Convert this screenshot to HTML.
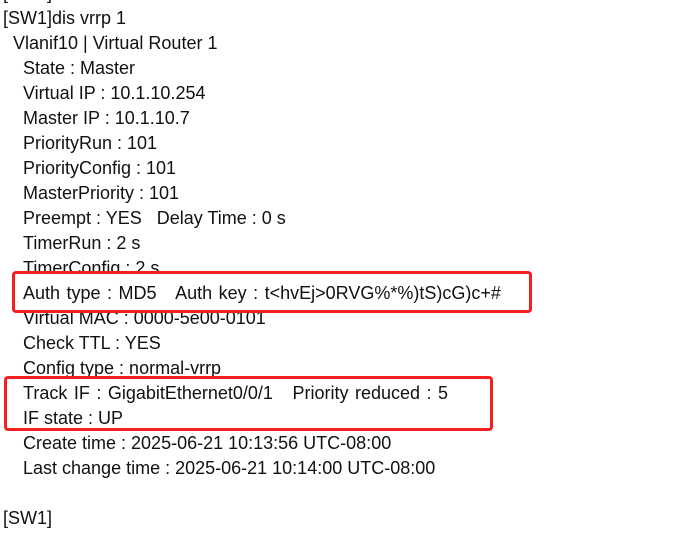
<!DOCTYPE html>
<html><head><style>
body{margin:0;background:#fff;width:673px;height:540px;overflow:hidden;position:relative;font-family:"Liberation Sans",sans-serif;font-size:18px;color:#111}
.l{position:absolute;white-space:pre;line-height:25px;height:25px;top:-1px}
.b{position:absolute;border:3px solid #f41f1f;border-radius:4px;box-sizing:border-box}
.w{word-spacing:1.5px}
</style></head><body>
<div class="l" style="left:3px;top:-19px">[SW1]</div>
<div class="l" style="left:3px;top:6px">[SW1]dis vrrp 1</div>
<div class="l" style="left:13px;top:31px">Vlanif10 | Virtual Router 1</div>
<div class="l" style="left:23px;top:56px">State : Master</div>
<div class="l" style="left:23px;top:81px">Virtual IP : 10.1.10.254</div>
<div class="l" style="left:23px;top:106px">Master IP : 10.1.10.7</div>
<div class="l" style="left:23px;top:131px">PriorityRun : 101</div>
<div class="l" style="left:23px;top:156px">PriorityConfig : 101</div>
<div class="l" style="left:23px;top:181px">MasterPriority : 101</div>
<div class="l" style="left:23px;top:206px">Preempt : YES   Delay Time : 0 s</div>
<div class="l" style="left:23px;top:231px">TimerRun : 2 s</div>
<div class="l" style="left:23px;top:256px">TimerConfig : 2 s</div>
<div class="l" style="left:23px;top:306px">Virtual MAC : 0000-5e00-0101</div>
<div class="l" style="left:23px;top:331px">Check TTL : YES</div>
<div class="l" style="left:23px;top:356px">Config type : normal-vrrp</div>
<div class="b" style="left:12px;top:271px;width:520px;height:42px;background:#fff"></div>
<div class="l w" style="left:23px;top:281px">Auth type : MD5   Auth key : t&lt;hvEj&gt;0RVG%*%)tS)cG)c+#</div>
<div class="l w" style="left:23px;top:381px">Track IF : GigabitEthernet0/0/1   Priority reduced : 5</div>
<div class="l" style="left:23px;top:406px">IF state : UP</div>
<div class="b" style="left:4px;top:376px;width:489px;height:55px"></div>
<div class="l" style="left:23px;top:431px">Create time : 2025-06-21 10:13:56 UTC-08:00</div>
<div class="l" style="left:23px;top:456px">Last change time : 2025-06-21 10:14:00 UTC-08:00</div>
<div class="l" style="left:3px;top:506px">[SW1]</div>
</body></html>
